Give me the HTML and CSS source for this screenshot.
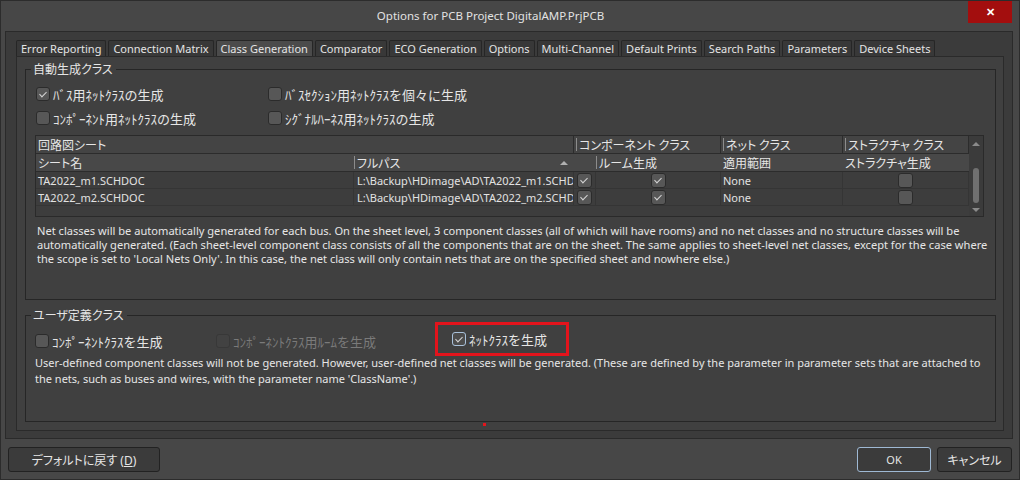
FILE: index.html
```html
<!DOCTYPE html>
<html lang="ja">

<head>
    <meta charset="UTF-8">
    <meta name="viewport" content="width=device-width, initial-scale=1.0">
    <title>Options for PCB Project DigitalAMP.PrjPCB</title>
    <link rel="stylesheet" href="styles.css">
</head>

<body>
    <div class="window">
        <div class="titlebar">
            <span class="title">Options for PCB Project DigitalAMP.PrjPCB</span>
            <button class="close-btn">✕</button>
        </div>

        <div class="frame">
            <div class="tabs">
                <span class="tab">Error Reporting</span>
                <span class="tab">Connection Matrix</span>
                <span class="tab active">Class Generation</span>
                <span class="tab">Comparator</span>
                <span class="tab">ECO Generation</span>
                <span class="tab">Options</span>
                <span class="tab">Multi-Channel</span>
                <span class="tab">Default Prints</span>
                <span class="tab">Search Paths</span>
                <span class="tab">Parameters</span>
                <span class="tab">Device Sheets</span>
            </div>

            <div class="panel">
                <!-- 自動生成クラス -->
                <fieldset class="group group-auto">
                    <legend>自動生成クラス</legend>
                    <div class="checks checks-auto">
                        <label class="check"><span class="box checked"></span>ﾊﾞｽ用ﾈｯﾄｸﾗｽの生成</label>
                        <label class="check"><span class="box"></span>ﾊﾞｽｾｸｼｮﾝ用ﾈｯﾄｸﾗｽを個々に生成</label>
                        <label class="check"><span class="box"></span>ｺﾝﾎﾟｰﾈﾝﾄ用ﾈｯﾄｸﾗｽの生成</label>
                        <label class="check"><span class="box"></span>ｼｸﾞﾅﾙﾊｰﾈｽ用ﾈｯﾄｸﾗｽの生成</label>
                    </div>

                    <div class="sheet-table">
                        <div class="sheet-cols">
                            <div class="row row-group">
                                <div class="cell span-2">回路図シート</div>
                                <div class="cell span-2"><span class="sep">コンポーネント クラス</span></div>
                                <div class="cell"><span class="sep">ネット クラス</span></div>
                                <div class="cell"><span class="sep">ストラクチャ クラス</span></div>
                            </div>
                            <div class="row row-head">
                                <div class="cell">シート名</div>
                                <div class="cell cell-path"><span class="sep">フルパス</span><span class="sort-up"></span></div>
                                <div class="cell"></div>
                                <div class="cell"><span class="sep">ルーム生成</span></div>
                                <div class="cell">適用範囲</div>
                                <div class="cell">ストラクチャ生成</div>
                            </div>
                            <div class="row row-data">
                                <div class="cell">TA2022_m1.SCHDOC</div>
                                <div class="cell cell-clip">L:\Backup\HDimage\AD\TA2022_m1.SCHD(</div>
                                <div class="cell cell-center"><span class="box checked"></span></div>
                                <div class="cell cell-center"><span class="box checked"></span></div>
                                <div class="cell">None</div>
                                <div class="cell cell-center"><span class="box"></span></div>
                            </div>
                            <div class="row row-data">
                                <div class="cell">TA2022_m2.SCHDOC</div>
                                <div class="cell cell-clip">L:\Backup\HDimage\AD\TA2022_m2.SCHD(</div>
                                <div class="cell cell-center"><span class="box checked"></span></div>
                                <div class="cell cell-center"><span class="box checked"></span></div>
                                <div class="cell">None</div>
                                <div class="cell cell-center"><span class="box"></span></div>
                            </div>
                        </div>
                        <div class="scrollbar">
                            <span class="arrow-up"></span>
                            <span class="thumb"></span>
                            <span class="arrow-down"></span>
                        </div>
                    </div>

                    <p class="desc desc-auto">
                        Net classes will be automatically generated for each bus. On the sheet level, 3 component classes (all of which will have rooms) and no net classes and no structure classes will be<br>
                        automatically generated. (Each sheet-level component class consists of all the components that are on the sheet. The same applies to sheet-level net classes, except for the case where<br>
                        the scope is set to 'Local Nets Only'. In this case, the net class will only contain nets that are on the specified sheet and nowhere else.)
                    </p>
                </fieldset>

                <!-- ユーザ定義クラス -->
                <fieldset class="group group-user">
                    <legend>ユーザ定義クラス</legend>
                    <div class="checks checks-user">
                        <label class="check"><span class="box"></span>ｺﾝﾎﾟｰﾈﾝﾄｸﾗｽを生成</label>
                        <label class="check disabled"><span class="box"></span>ｺﾝﾎﾟｰﾈﾝﾄｸﾗｽ用ﾙｰﾑを生成</label>
                        <div class="highlight">
                            <label class="check"><span class="box checked focused"></span>ﾈｯﾄｸﾗｽを生成</label>
                        </div>
                    </div>
                    <p class="desc desc-user">
                        User-defined component classes will not be generated. However, user-defined net classes will be generated. (These are defined by the parameter in parameter sets that are attached to<br>
                        the nets, such as buses and wires, with the parameter name 'ClassName'.)
                    </p>
                </fieldset>

                <span class="mark"></span>
            </div>
        </div>

        <div class="footer">
            <button class="btn btn-default">デフォルトに戻す (<u>D</u>)</button>
            <button class="btn btn-ok">OK</button>
            <button class="btn btn-cancel">キャンセル</button>
        </div>
    </div>
</body>

</html>
```

FILE: styles.css
```css
* {
    box-sizing: border-box;
}

body {
    margin: 0;
    background-color: #474747;
    font-family: "Noto Sans", "Noto Sans CJK JP", sans-serif;
    font-size: 11px;
    color: #e6e6e6;
}

.window {
    width: 1020px;
    height: 480px;
    border: 1px solid #2c2c2c;
    background-color: #474747;
    display: flex;
    flex-direction: column;
}

/* title bar */
.titlebar {
    height: 30px;
    display: flex;
    align-items: flex-start;
    flex-shrink: 0;
}

.title {
    flex: 1;
    text-align: center;
    padding-left: 12px;
    line-height: 29px;
    font-size: 11.5px;
    color: #e2e2e2;
}

.close-btn {
    width: 44px;
    height: 22px;
    margin-right: 7px;
    border: none;
    background-color: #a30e0e;
    color: #fff;
    font-size: 11px;
    font-weight: bold;
    padding: 0;
}

/* outer frame with tabs */
.frame {
    height: 408px;
    margin: 0 6px 0 4px;
    border: 1px solid #2a2a2a;
    background-color: #3b3b3b;
    padding: 8px 8px 7px 10px;
    flex-shrink: 0;
}

.tabs {
    display: flex;
    gap: 2px;
    height: 16px;
}

.tab {
    height: 16px;
    padding: 0 4px;
    line-height: 15px;
    background-color: #383838;
    border: 1px solid #262626;
    border-bottom: none;
    border-radius: 2px 2px 0 0;
    color: #e4e4e4;
    white-space: nowrap;
}

.tab.active {
    background-color: #4b4b4b;
}

.panel {
    position: relative;
    height: 375px;
    border: 1px solid #2a2a2a;
    background-color: #404040;
    padding: 4px 7px 0 8px;
}

/* group boxes */
.group {
    margin: 0;
    min-width: 0;
    border: 1px solid #262626;
    padding: 0 10px 33px 9px;
}

.group legend {
    margin-left: -4px;
    padding: 0 3px 0 2px;
    height: 16px;
    line-height: 16px;
    font-family: "Noto Sans CJK JP", sans-serif;
    font-size: 12px;
    font-feature-settings: "palt";
}

.group-user {
    margin-top: 7px;
    padding-bottom: 34px;
}

.checks {
    display: grid;
    padding-top: 5px;
}

.checks-auto {
    grid-template-columns: 232px auto;
    padding-left: 1px;
}

.checks-user {
    grid-template-columns: 181px 219px auto;
    padding-top: 6px;
}

.check {
    display: flex;
    align-items: center;
    gap: 3px;
    height: 24px;
    font-family: "Noto Sans CJK JP", sans-serif;
    font-size: 13px;
    white-space: nowrap;
}

.check.disabled {
    color: #7a7a7a;
}

.box {
    position: relative;
    display: inline-block;
    width: 14px;
    height: 14px;
    flex-shrink: 0;
    border: 1px solid #2b2b2b;
    border-radius: 3px;
    background-color: #575757;
}

.box.checked::after {
    content: "";
    position: absolute;
    left: 4px;
    top: 2px;
    width: 3px;
    height: 6px;
    border: solid #d6d6d6;
    border-width: 0 1px 1px 0;
    transform: rotate(45deg);
}

.box.focused {
    border-color: #a9c1da;
    background-color: #4c4c4c;
}

.check.disabled .box {
    background-color: #424242;
    border-color: #383838;
}

.highlight {
    width: 134px;
    height: 34px;
    margin: -7px 0 -3px;
    border: 3px solid #e3141c;
    padding: 2px 0 2px 14px;
}

/* sheet table */
.sheet-table {
    display: flex;
    width: 949px;
    height: 82px;
    margin-top: 5px;
    border: 1px solid #2a2a2a;
    background-color: #3d3d3d;
}

.sheet-cols {
    width: 933px;
}

.row {
    display: grid;
    grid-template-columns: 318px 220px 22px 125px 122px 126px;
}

.cell {
    display: flex;
    align-items: center;
    padding-left: 2px;
    overflow: hidden;
    white-space: nowrap;
}

.span-2 {
    grid-column: span 2;
}

.row-group {
    height: 18px;
}

.row-group .cell,
.row-head .cell {
    font-family: "Noto Sans CJK JP", sans-serif;
    font-size: 12px;
    font-feature-settings: "palt";
}

.row-group .cell {
    background-color: #444;
    border-right: 1px solid #2c2c2c;
    border-bottom: 1px solid #2c2c2c;
}

.row-head {
    height: 18px;
    background-color: #484848;
    border-bottom: 1px solid #2c2c2c;
}

.row-head .cell:nth-child(2),
.row-head .cell:nth-child(4) {
    padding-left: 0;
}

.sep {
    border-left: 1px solid #8c8c8c;
    padding-left: 2px;
    line-height: 13px;
}

.cell-path {
    justify-content: space-between;
    padding-right: 6px;
}

.sort-up {
    width: 0;
    height: 0;
    border-left: 4px solid transparent;
    border-right: 4px solid transparent;
    border-bottom: 4px solid #b0b0b0;
}

.row-data {
    height: 17px;
    border-bottom: 1px solid #353535;
}

.row-data .cell {
    border-right: 1px solid #353535;
    color: #e2e2e2;
}

.row-data .cell-clip {
    padding-left: 3px;
}

.cell-center {
    justify-content: center;
    padding-left: 0;
}

.row-data .box {
    width: 15px;
    height: 15px;
}

.scrollbar {
    width: 14px;
    display: flex;
    flex-direction: column;
    align-items: center;
    background-color: #3b3b3b;
}

.arrow-up,
.arrow-down {
    width: 0;
    height: 0;
    border-left: 4px solid transparent;
    border-right: 4px solid transparent;
}

.arrow-up {
    margin-top: 6px;
    border-bottom: 4px solid #8a8a8a;
}

.arrow-down {
    margin-top: 5px;
    border-top: 4px solid #8a8a8a;
}

.thumb {
    width: 6px;
    height: 35px;
    margin-top: 22px;
    border-radius: 3px;
    background-color: #707070;
}

/* descriptions */
.desc {
    margin: 0;
    white-space: nowrap;
    color: #e6e6e6;
}

.desc-auto {
    margin-top: 7px;
    padding-left: 2px;
    font-size: 11.1px;
    line-height: 14px;
}

.desc-user {
    margin-top: 2px;
    font-size: 11px;
    line-height: 16px;
}

.mark {
    position: absolute;
    left: 466px;
    top: 366px;
    width: 3px;
    height: 3px;
    background-color: #e3141c;
}

/* footer buttons */
.footer {
    display: flex;
    align-items: flex-start;
    gap: 6px;
    padding: 8px 7px 0 7px;
}

.btn {
    height: 25px;
    padding: 0;
    border: 1px solid #222;
    border-radius: 3px;
    background-color: #3b3b3b;
    color: #e6e6e6;
    font-family: "Noto Sans", "Noto Sans CJK JP", sans-serif;
    font-size: 12px;
    font-feature-settings: "palt";
}

.btn-default {
    width: 152px;
    margin-right: auto;
}

.btn-ok {
    width: 74px;
    border-color: #9fb9d4;
    font-size: 11px;
}

.btn-cancel {
    width: 75px;
}
```
